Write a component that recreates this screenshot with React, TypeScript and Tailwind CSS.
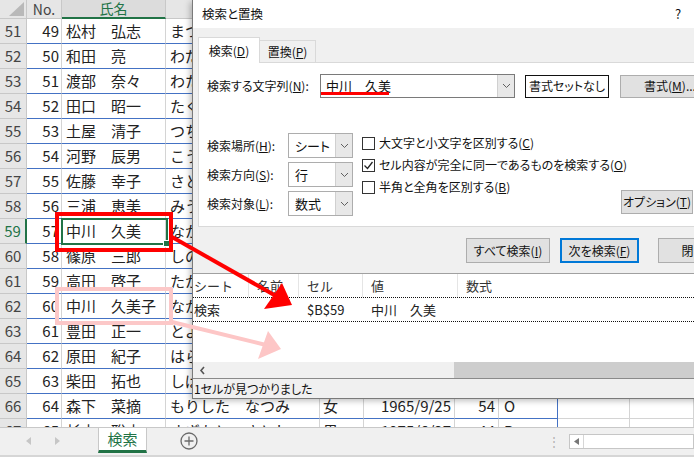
import React from 'react'

const FONT = "font-['Noto_Sans_CJK_JP','Noto_Sans',sans-serif]"

// row: [rowNo, no, name, kana, sex, birth, age, blood]
const ROWS: (string | number)[][] = [
  [51, 49, '松村　弘志', 'まつむら　ひろし', '男', '1970/3/12', 49, 'A'],
  [52, 50, '和田　亮', 'わだ　りょう', '男', '1982/7/4', 37, 'B'],
  [53, 51, '渡部　奈々', 'わたべ　なな', '女', '1990/1/23', 30, 'O'],
  [54, 52, '田口　昭一', 'たぐち　しょういち', '男', '1958/11/2', 61, 'A'],
  [55, 53, '土屋　清子', 'つちや　きよこ', '女', '1963/5/18', 56, 'AB'],
  [56, 54, '河野　辰男', 'こうの　たつお', '男', '1976/9/9', 43, 'A'],
  [57, 55, '佐藤　幸子', 'さとう　さちこ', '女', '1968/2/14', 52, 'O'],
  [58, 56, '三浦　恵美', 'みうら　めぐみ', '女', '1985/6/30', 34, 'B'],
  [59, 57, '中川　久美', 'なかがわ　くみ', '女', '1979/4/7', 40, 'A'],
  [60, 58, '篠原　三郎', 'しのはら　さぶろう', '男', '1955/8/21', 64, 'O'],
  [61, 59, '高田　啓子', 'たかだ　けいこ', '女', '1972/12/1', 47, 'A'],
  [62, 60, '中川　久美子', 'なかがわ　くみこ', '女', '1988/10/16', 31, 'B'],
  [63, 61, '豊田　正一', 'とよだ　しょういち', '男', '1961/3/3', 58, 'A'],
  [64, 62, '原田　紀子', 'はらだ　のりこ', '女', '1974/7/27', 45, 'O'],
  [65, 63, '柴田　拓也', 'しばた　たくや', '男', '1993/1/11', 27, 'AB'],
  [66, 64, '森下　菜摘', 'もりした　なつみ', '女', '1965/9/25', 54, 'O'],
  [67, 65, '杉本　聡史', 'すぎもと　さとし', '男', '1975/6/27', 44, 'B'],
]

const CELL = [
  'w-[27px] justify-center bg-[#e6e6e6] border-r border-b border-[#c8c8c8] text-[#444] text-[15px]',
  'w-[35px] justify-end pr-[2px] border-r border-b border-r-[#d4d4d4] border-b-[#4472c4]',
  'w-[104px] pl-[4px] border-r border-b border-r-[#d4d4d4] border-b-[#4472c4]',
  'w-[154px] pl-[4px] border-r border-b border-r-[#d4d4d4] border-b-[#4472c4]',
  'w-[44px] pl-[3px] border-r border-b border-r-[#d4d4d4] border-b-[#4472c4]',
  'w-[91px] justify-end pr-[3px] border-r border-b border-r-[#d4d4d4] border-b-[#4472c4]',
  'w-[44px] justify-end pr-[3px] border-r border-b border-r-[#d4d4d4] border-b-[#4472c4]',
  'w-[59px] pl-[5px] border-r border-b border-r-[#4472c4] border-b-[#4472c4]',
  'w-[72px] border-r border-b border-[#d4d4d4]',
  'w-[64px] border-r border-b border-[#d4d4d4]',
]

const HEAD = ['', 'No.', '氏名', 'ふりがな', '性別', '生年月日', '年齢', '血液型', '', '']
const HEAD_W = ['w-[27px]', 'w-[35px]', 'w-[104px]', 'w-[154px]', 'w-[44px]', 'w-[91px]', 'w-[44px]', 'w-[59px]', 'w-[72px]', 'w-[64px]']

function Chevron() {
  return (
    <svg width="9" height="6" viewBox="0 0 9 6" fill="none" stroke="#606060" strokeWidth="1">
      <path d="M1 1l3.5 3.5L8 1" />
    </svg>
  )
}

function Select({ value, w }: { value: string; w: string }) {
  return (
    <div className={`${w} h-[25px] flex bg-white border border-[#adadad]`}>
      <span className="flex-1 flex items-center pl-[6px] text-[13px] text-[#111]">{value}</span>
      <span className="w-[17px] flex items-center justify-center bg-[#e8e8e8] border-l border-[#d0d0d0]">
        <Chevron />
      </span>
    </div>
  )
}

function Check({ checked, children }: { checked?: boolean; children: React.ReactNode }) {
  return (
    <div className="h-[22px] flex items-center gap-[4px]">
      <span className="w-[13px] h-[13px] border border-[#333] bg-white flex items-center justify-center">
        {checked && (
          <svg width="11" height="11" viewBox="0 0 11 11" fill="none" stroke="#222" strokeWidth="1.3">
            <path d="M1.5 5.5l3 3 5-6.5" />
          </svg>
        )}
      </span>
      <span>{children}</span>
    </div>
  )
}

function Btn({ w, children, focus }: { w: string; children: React.ReactNode; focus?: boolean }) {
  return (
    <div
      className={`${w} shrink-0 h-[25px] flex items-center justify-center bg-[#e1e1e1] ${
        focus ? 'border-2 border-[#0078d7]' : 'border border-[#adadad]'
      }`}
    >
      {children}
    </div>
  )
}

function Dialog() {
  return (
    <div className="absolute left-[192px] top-0 w-[580px] h-[399px] bg-[#f0f0f0] border-l border-b border-[#7a7a7a] text-[12px] text-[#111] whitespace-nowrap [font-feature-settings:'palt'] shadow-[-2px_2px_6px_rgba(0,0,0,0.25)] flex flex-col">
      {/* title bar */}
      <div className="h-[28px] bg-white flex items-center pl-[9px]">
        <span className="text-[12.5px]">検索と置換</span>
        <span className="ml-[412px] text-[13px]">?</span>
      </div>

      {/* tabs */}
      <div className="mt-[9px] pl-[5px] flex items-end">
        <div className="relative z-10 -mb-px w-[62px] h-[26px] bg-white border border-b-0 border-[#d9d9d9] flex items-center justify-center">
          検索(<u>D</u>)
        </div>
        <div className="w-[56px] h-[22px] border border-l-0 border-b-0 border-[#d9d9d9] flex items-center justify-center">
          置換(<u>P</u>)
        </div>
      </div>

      {/* tab panel */}
      <div className="ml-[5px] h-[165px] bg-white border border-[#d9d9d9] pl-[8px] pt-[11px]">
        <div className="flex items-center h-[24px]">
          <span className="w-[113px] shrink-0">検索する文字列(<u>N</u>):</span>
          <div className="relative shrink-0 w-[195px] h-[24px] flex bg-white border border-[#7a7a7a]">
            <span className="flex-1 flex items-center pl-[5px] text-[13px] [font-feature-settings:normal]">中川　久美</span>
            <span className="w-[17px] flex items-center justify-center bg-[#e8e8e8] border-l border-[#d0d0d0]">
              <Chevron />
            </span>
            <span className="absolute left-0 top-[17px] w-[68px] h-[3px] bg-[#ff0000]" />
          </div>
          <div className="ml-[10px] shrink-0 w-[84px] h-[23px] flex items-center justify-center bg-white border border-[#111]">
            書式セットなし
          </div>
          <div className="ml-[11px] shrink-0 w-[100px] h-[23px] flex items-center justify-center bg-[#e1e1e1] border border-[#adadad]">
            書式(<u>M</u>)...
          </div>
        </div>

        <div className="mt-[35px] flex items-end">
          <div className="flex flex-col gap-[4px]">
            <div className="flex items-center">
              <span className="w-[81px]">検索場所(<u>H</u>):</span>
              <Select value="シート" w="w-[65px]" />
            </div>
            <div className="flex items-center">
              <span className="w-[81px]">検索方向(<u>S</u>):</span>
              <Select value="行" w="w-[65px]" />
            </div>
            <div className="flex items-center">
              <span className="w-[81px]">検索対象(<u>L</u>):</span>
              <Select value="数式" w="w-[65px]" />
            </div>
          </div>
          <div className="ml-[9px] w-[259px] shrink-0 self-start -mt-[1px] flex flex-col">
            <Check>大文字と小文字を区別する(<u>C</u>)</Check>
            <Check checked>セル内容が完全に同一であるものを検索する(<u>O</u>)</Check>
            <Check>半角と全角を区別する(<u>B</u>)</Check>
          </div>
          <div className="mb-[2px] shrink-0 w-[72px] h-[24px] flex items-center justify-center bg-[#e1e1e1] border border-[#adadad]">
            オプション(<u>T</u>)
          </div>
        </div>
      </div>

      {/* action buttons */}
      <div className="mt-[11px] ml-[273px] flex gap-[10px]">
        <Btn w="w-[84px]">すべて検索(<u>I</u>)</Btn>
        <Btn w="w-[79px]" focus>次を検索(<u>F</u>)</Btn>
        <div className="ml-[9px] shrink-0">
          <Btn w="w-[80px]">閉じる</Btn>
        </div>
      </div>

      {/* results list */}
      <div className="mt-[10px] bg-white border-t border-[#a0a0a0] flex flex-col text-[13px] [font-feature-settings:normal]">
        <div className="h-[23px] flex items-center text-[#333]">
          <span className="w-[56px] h-full flex items-center pl-[1px] border-r border-[#e5e5e5]">シート</span>
          <span className="w-[50px] h-full flex items-center pl-[8px] border-r border-[#e5e5e5]">名前</span>
          <span className="w-[64px] h-full flex items-center pl-[8px] border-r border-[#e5e5e5]">セル</span>
          <span className="w-[95px] h-full flex items-center pl-[8px] border-r border-[#e5e5e5]">値</span>
          <span className="flex-1 h-full flex items-center pl-[8px]">数式</span>
        </div>
        <div className="h-[25px] flex items-center border-y border-dotted border-[#111] text-[#222]">
          <span className="w-[56px] pl-[1px]">検索</span>
          <span className="w-[50px]" />
          <span className="w-[64px] pl-[8px]">$B$59</span>
          <span className="w-[95px] pl-[8px]">中川　久美</span>
        </div>
        <div className="h-[40px]" />
        <div className="h-[16px] flex bg-[#f0f0f0]">
          <span className="w-[261px] flex items-center pl-[6px]">
            <svg width="7" height="9" viewBox="0 0 7 9" fill="none" stroke="#555" strokeWidth="1.6">
              <path d="M5 1L2 4.5 5 8" />
            </svg>
          </span>
          <span className="flex-1 bg-[#cdcdcd]" />
        </div>
      </div>
      <div className="flex-1 border-t border-[#8a8a8a] flex items-center pl-[1px]">1セルが見つかりました</div>
    </div>
  )
}

export default function App() {
  return (
    <div className={`relative w-[694px] h-[457px] overflow-hidden bg-white text-[#222] ${FONT}`}>
      {/* sheet */}
      <div className="h-[427px] overflow-hidden">
        <div className="flex h-[19px]">
          {HEAD.map((h, i) => (
            <div
              key={i}
              className={`${HEAD_W[i]} relative shrink-0 flex items-center justify-center border-r border-[#c8c8c8] text-[14px] ${
                i === 2
                  ? 'bg-[#dcdcdc] text-[#217346] border-b-2 border-b-[#217346]'
                  : 'bg-[#e6e6e6] text-[#444] border-b border-b-[#c8c8c8]'
              }`}
            >
              {i === 0 ? (
                <svg className="absolute left-0 top-0" width="26" height="18" viewBox="0 0 26 18">
                  <path d="M9 16L24 16 24 2z" fill="#b9b9b9" />
                </svg>
              ) : (
                h
              )}
            </div>
          ))}
        </div>
        {ROWS.map((r) => (
          <div key={r[0]} className="flex h-[25px] text-[15px]">
            {r.concat(['', '']).map((v, i) => (
              <div
                key={i}
                className={`${CELL[i]} shrink-0 flex items-center whitespace-nowrap overflow-hidden ${
                  i === 0 && r[0] === 59 ? 'bg-[#d2d2d2] text-[#217346] border-r-2 border-r-[#217346]' : ''
                }`}
              >
                {v}
              </div>
            ))}
          </div>
        ))}
      </div>

      {/* sheet tabs bar */}
      <div className="h-[30px] flex items-start bg-[#f0f0f0] border-t border-[#c8c8c8] border-b-2 border-b-[#d6d6d6]">
        <div className="w-[98px] h-[26px] flex items-center gap-[22px] pl-[26px]">
          <svg width="6" height="8" viewBox="0 0 6 8"><path d="M5 0v8L0 4z" fill="#c6c6c6" /></svg>
          <svg width="6" height="8" viewBox="0 0 6 8"><path d="M1 0v8l5-4z" fill="#c6c6c6" /></svg>
        </div>
        <div className="w-[49px] h-[25px] bg-white border-x border-[#c8c8c8] border-b-[3px] border-b-[#217346] flex items-center justify-center text-[15px] text-[#217346]">
          検索
        </div>
        <div className="ml-[33px] h-[26px] flex items-center">
          <svg width="18" height="18" viewBox="0 0 18 18" fill="none" stroke="#6a6a6a" strokeWidth="1.3">
            <circle cx="9" cy="9" r="8" />
            <path d="M9 4.5v9M4.5 9h9" />
          </svg>
        </div>
        <div className="ml-[350px] h-[26px] flex items-center text-[#b0b0b0] text-[12px]">⋮</div>
        <div className="ml-[9px] mt-[6px] flex-1 h-[15px] bg-white border border-[#c6c6c6] flex">
          <span className="w-[14px] flex items-center justify-center border-r border-[#d6d6d6]">
            <svg width="5" height="7" viewBox="0 0 5 7"><path d="M5 0v7L0 3.5z" fill="#777" /></svg>
          </span>
        </div>
      </div>

      {/* selected cell */}
      <div className="absolute left-[61px] top-[218px] w-[107px] h-[27px] border-2 border-[#217346]" />
      <div className="absolute left-[163px] top-[240px] w-[7px] h-[7px] bg-[#217346] border border-white" />

      {/* annotations on sheet */}
      <div className="absolute left-[55px] top-[212px] w-[118px] h-[40px] border-4 border-[#ff0000]" />
      <div className="absolute left-[55px] top-[287px] w-[118px] h-[38px] border-4 border-[#fcc8c8]" />

      <Dialog />

      {/* arrows */}
      <svg className="absolute left-0 top-0 pointer-events-none" width="694" height="457" viewBox="0 0 694 457">
        <line x1="172" y1="322" x2="266" y2="345" stroke="#fdc6c6" strokeWidth="4" />
        <path d="M281 349L268 331 258 359z" fill="#fdc6c6" />
        <line x1="172" y1="237" x2="276" y2="296" stroke="#ff0000" strokeWidth="4" />
        <path d="M292 305L282 283 264 309z" fill="#ff0000" />
      </svg>
    </div>
  )
}
